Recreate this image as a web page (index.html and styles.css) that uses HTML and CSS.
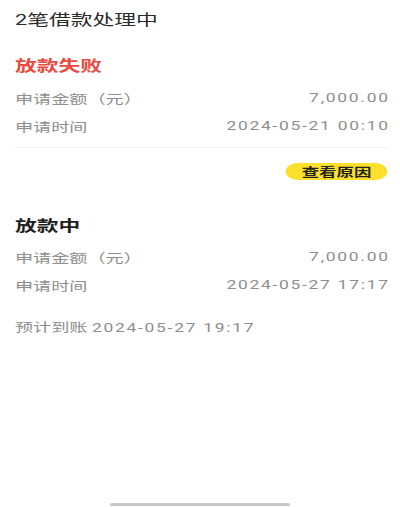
FILE: index.html
```html
<!DOCTYPE html>
<html lang="zh-CN">
<head>
<meta charset="utf-8">
<title>2笔借款处理中</title>
<link rel="stylesheet" href="styles.css">
</head>
<body>
<div class="page">
  <h1 class="title">2笔借款处理中</h1>

  <section class="loan">
    <h2 class="status status-failed">放款失败</h2>
    <div class="row"><span class="label">申请金额（元）</span><span class="value">7,000.00</span></div>
    <div class="row"><span class="label">申请时间</span><span class="value">2024-05-21 00:10</span></div>
    <div class="divider"></div>
    <div class="actions"><button class="reason-btn" type="button">查看原因</button></div>
  </section>

  <section class="loan loan-pending">
    <h2 class="status">放款中</h2>
    <div class="row"><span class="label">申请金额（元）</span><span class="value">7,000.00</span></div>
    <div class="row"><span class="label">申请时间</span><span class="value">2024-05-27 17:17</span></div>
    <p class="eta">预计到账 <span class="eta-time">2024-05-27 19:17</span></p>
  </section>
</div>
<div class="home-indicator"></div>
</body>
</html>
```

FILE: styles.css
```css
html, body {
  margin: 0;
  padding: 0;
  background: #ffffff;
}

body {
  width: 400px;
  height: 507px;
  overflow: hidden;
  position: relative;
  font-family: Roboto, "Noto Sans CJK SC", sans-serif;
}

.page {
  width: 275.9px;
  box-sizing: border-box;
  padding: 10px 8.3px 0 10.3px;
  transform: scaleX(1.45);
  transform-origin: 0 0;
}

.title {
  margin: 0;
  font-size: 15px;
  line-height: 20px;
  font-weight: 400;
  color: #2a2a2a;
}

.loan {
  display: flex;
  flex-direction: column;
  margin-top: 26px;
}

.loan-pending {
  margin-top: 36px;
}

.status {
  margin: 0 0 12px;
  font-size: 15px;
  line-height: 20px;
  font-weight: 700;
  color: #1f1f1f;
}

.status-failed {
  color: #ea4a3f;
}

.loan-pending .status {
  margin-bottom: 11px;
}

.row {
  display: flex;
  justify-content: space-between;
  align-items: center;
  height: 20px;
  font-size: 12.5px;
  color: #8e8e8e;
}

.row + .row {
  margin-top: 8px;
}

.value {
  font-size: 12px;
  letter-spacing: 1.2px;
  margin-right: -1.2px;
}

.divider {
  height: 1px;
  background: #f4f4f4;
  margin-top: 11px;
}

.actions {
  display: flex;
  justify-content: flex-end;
  margin-top: 15px;
  padding-right: 0.5px;
}

.reason-btn {
  border: none;
  margin: 0;
  height: 17px;
  padding: 0 11px;
  border-radius: 9px;
  background: #fde02c;
  color: #222222;
  font-family: "Noto Sans CJK SC", sans-serif;
  font-size: 12px;
  font-weight: 700;
  line-height: 17px;
}

.eta {
  margin: 23px 0 0;
  font-size: 12.5px;
  line-height: 20px;
  color: #8e8e8e;
}

.eta-time {
  font-size: 12px;
  letter-spacing: 1.2px;
}

.home-indicator {
  position: absolute;
  left: 110px;
  top: 503px;
  width: 180px;
  height: 3px;
  border-radius: 2px;
  background: #c9c9c9;
}
```
